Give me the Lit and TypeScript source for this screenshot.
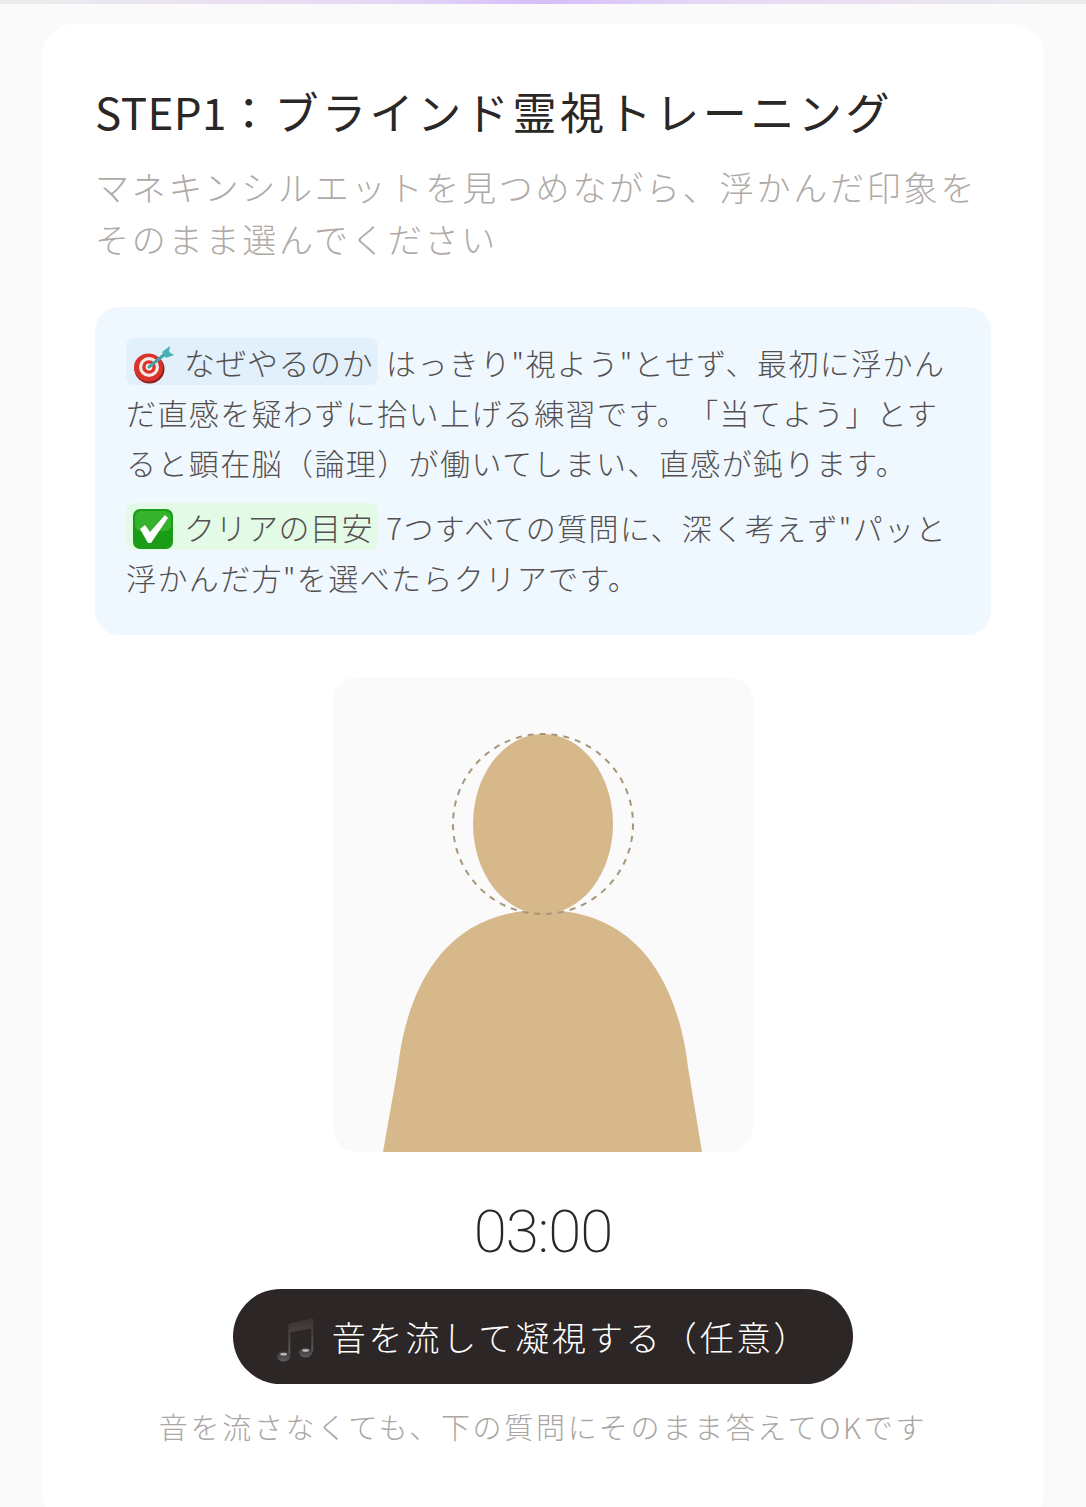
import { LitElement, html, css } from 'lit'
import { customElement } from 'lit/decorators.js'

@customElement('app-root')
export class AppRoot extends LitElement {
  static styles = css`
    :host {
      display: block;
      height: 1507px;
      overflow: hidden;
      background: #fafafa;
      font-family: "Noto Sans CJK JP", "Noto Sans", sans-serif;
      font-weight: 300;
      text-spacing-trim: space-all;
    }

    .topbar {
      height: 4px;
      background: linear-gradient(90deg, #ececec 0%, #e6d8f5 35%, #d5bdfa 50%, #e6d8f5 65%, #ececec 100%);
    }

    .page {
      padding: 20px 42px 0;
    }

    .card {
      background: #fff;
      border-radius: 32px;
      padding: 58px 53px 80px;
      height: 1500px;
      box-sizing: border-box;
    }

    h1 {
      margin: 0;
      font-size: 44px;
      line-height: 58px;
      font-weight: 400;
      letter-spacing: 3.6px;
      color: #2b2727;
      white-space: nowrap;
    }

    h1 .step {
      font-size: 44px;
      letter-spacing: 0.4px;
    }

    .sub {
      margin: 21px 0 0;
      font-size: 34px;
      line-height: 52px;
      letter-spacing: 2.8px;
      color: #b0aaa6;
    }

    .info {
      margin-top: 42px;
      box-sizing: border-box;
      background: #f0f8ff;
      border-radius: 24px;
      padding: 30px 32px 33px 31px;
      font-size: 30px;
      line-height: 50px;
      letter-spacing: 1.4px;
      color: #555050;
    }

    .info p {
      margin: 0;
    }

    .info p + p {
      margin-top: 15px;
    }

    .tag {
      display: inline-block;
      height: 47px;
      line-height: 47px;
      padding: 0 5px 0 6px;
      border-radius: 8px;
      margin-right: 8px;
      font-size: 31px;
      letter-spacing: 0.5px;
    }

    .tag.blue {
      background: #e1f0fb;
    }

    .tag.green {
      background: #e2fae6;
    }

    .tag svg {
      width: 42px;
      height: 42px;
      vertical-align: -10px;
      margin-right: 10px;
    }

    .figure {
      display: block;
      width: 420px;
      height: 475px;
      margin: 42px auto 0;
      background: #fafafa;
      border-radius: 24px;
    }

    .body-wrap {
      width: 896px;
    }

    .timer {
      margin-top: 45px;
      text-align: center;
      font-family: Roboto, sans-serif;
      font-weight: 200;
      font-size: 60px;
      line-height: 70px;
      letter-spacing: -1px;
      color: #2b2727;
    }

    .play {
      display: flex;
      align-items: center;
      justify-content: center;
      gap: 14px;
      width: 620px;
      height: 95px;
      margin: 22px auto 0;
      border: 0;
      border-radius: 48px;
      background: #2c2626;
      color: #fff;
      font-family: inherit;
      font-weight: 300;
      font-size: 34px;
      letter-spacing: 2.9px;
    }

    .play svg {
      width: 42px;
      height: 50px;
      margin-top: 4px;
    }

    .note {
      margin: 22px 0 0;
      text-align: center;
      font-size: 29px;
      line-height: 40px;
      letter-spacing: 2.7px;
      color: #aaa6a3;
    }
  `

  render() {
    return html`
      <div class="topbar"></div>
      <div class="page">
        <main class="card">
          <div class="body-wrap">
            <h1><span class="step">STEP1</span>：ブラインド霊視トレーニング</h1>
            <p class="sub">マネキンシルエットを見つめながら、浮かんだ印象をそのまま選んでください</p>

            <section class="info">
              <p>
                <span class="tag blue">${this.renderTarget()}なぜやるのか</span>はっきり"視よう"とせず、最初に浮かんだ直感を疑わずに拾い上げる練習です。「当てよう」とすると顕在脳（論理）が働いてしまい、直感が鈍ります。
              </p>
              <p>
                <span class="tag green">${this.renderCheck()}クリアの目安</span>7つすべての質問に、深く考えず"パッと浮かんだ方"を選べたらクリアです。
              </p>
            </section>

            <svg class="figure" viewBox="0 0 420 475">
              <path d="M50 475 L65 390 C72 330 100 233 210 233 C320 233 348 330 355 390 L369 475 Z" fill="#d7b88a" />
              <ellipse cx="210" cy="147" rx="70" ry="90" fill="#d7b88a" />
              <circle cx="210" cy="147" r="90" fill="none" stroke="#a8967a" stroke-width="2" stroke-dasharray="6 6" />
            </svg>

            <div class="timer">03:00</div>

            <button class="play">${this.renderNotes()}<span>音を流して凝視する（任意）</span></button>
            <p class="note">音を流さなくても、下の質問にそのまま答えてOKです</p>
          </div>
        </main>
      </div>
    `
  }

  renderTarget() {
    return html`<svg viewBox="0 0 42 42">
      <ellipse cx="17.5" cy="26" rx="15" ry="14.5" fill="#8f1d1d" />
      <ellipse cx="16.5" cy="24.5" rx="14.5" ry="14" fill="#d8342c" />
      <ellipse cx="17" cy="24" rx="10" ry="10" fill="#f6e9e6" />
      <circle cx="17" cy="24" r="6.8" fill="#d8342c" />
      <circle cx="17" cy="24" r="3.4" fill="#f6e9e6" />
      <path d="M17 24 L33 11" stroke="#3fa5a8" stroke-width="3" stroke-linecap="round" />
      <path d="M30 9 L38 3 L37 9 L42 12 L34 15 Z" fill="#46b3b5" />
    </svg>`
  }

  renderCheck() {
    return html`<svg viewBox="0 0 42 42">
      <rect x="1" y="1" width="40" height="40" rx="7" fill="#1b9c17" />
      <rect x="3" y="3" width="36" height="20" rx="6" fill="#4dc63f" opacity="0.55" />
      <path d="M8 21 L13 17 L18 24 L33 7 L36 10 L19 35 L16 35 Z" fill="#fff" />
    </svg>`
  }

  renderNotes() {
    return html`<svg viewBox="0 0 44 50">
      <defs>
        <linearGradient id="note" x1="0" y1="0" x2="0" y2="1">
          <stop offset="0" stop-color="#3b3030" />
          <stop offset="1" stop-color="#5c5c5c" />
        </linearGradient>
      </defs>
      <path d="M13 9 L39 3 L39 38 L37 38 L37 14 L15 18 L15 42 L13 42 Z" fill="url(#note)" />
      <ellipse cx="8" cy="43" rx="7" ry="5.5" fill="url(#note)" />
      <ellipse cx="31" cy="39" rx="7" ry="5.5" fill="url(#note)" />
      <ellipse cx="8" cy="41" rx="3.5" ry="1.5" fill="#b5b5b5" />
      <ellipse cx="31" cy="37" rx="3.5" ry="1.5" fill="#b5b5b5" />
    </svg>`
  }
}
